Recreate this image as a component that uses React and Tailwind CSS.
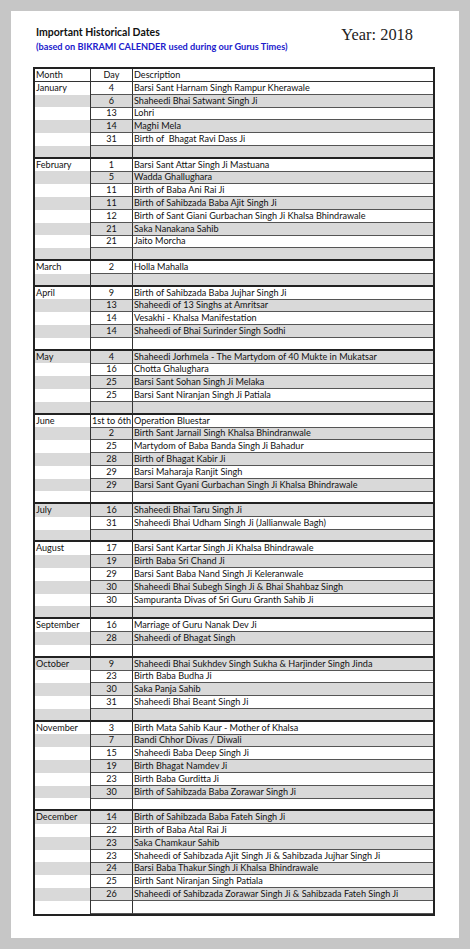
import React from "react";

const months = [
  ["January", [
    ["4", "Barsi Sant Harnam Singh Rampur Kherawale"],
    ["6", "Shaheedi Bhai Satwant Singh Ji"],
    ["13", "Lohri"],
    ["14", "Maghi Mela"],
    ["31", "Birth of  Bhagat Ravi Dass Ji"],
  ]],
  ["February", [
    ["1", "Barsi Sant Attar Singh Ji Mastuana"],
    ["5", "Wadda Ghallughara"],
    ["11", "Birth of Baba Ani Rai Ji"],
    ["11", "Birth of Sahibzada Baba Ajit Singh Ji"],
    ["12", "Birth of Sant Giani Gurbachan Singh Ji Khalsa Bhindrawale"],
    ["21", "Saka Nanakana Sahib"],
    ["21", "Jaito Morcha"],
  ]],
  ["March", [["2", "Holla Mahalla"]]],
  ["April", [
    ["9", "Birth of Sahibzada Baba Jujhar Singh Ji"],
    ["13", "Shaheedi of 13 Singhs at Amritsar"],
    ["14", "Vesakhi - Khalsa Manifestation"],
    ["14", "Shaheedi of Bhai Surinder Singh Sodhi"],
  ]],
  ["May", [
    ["4", "Shaheedi Jorhmela - The Martydom of 40 Mukte in Mukatsar"],
    ["16", "Chotta Ghalughara"],
    ["25", "Barsi Sant Sohan Singh Ji Melaka"],
    ["25", "Barsi Sant Niranjan Singh Ji Patiala"],
  ]],
  ["June", [
    ["1st to 6th", "Operation Bluestar"],
    ["2", "Birth Sant Jarnail Singh Khalsa Bhindranwale"],
    ["25", "Martydom of Baba Banda Singh Ji Bahadur"],
    ["28", "Birth of Bhagat Kabir Ji"],
    ["29", "Barsi Maharaja Ranjit Singh"],
    ["29", "Barsi Sant Gyani Gurbachan Singh Ji Khalsa Bhindrawale"],
  ]],
  ["July", [
    ["16", "Shaheedi Bhai Taru Singh Ji"],
    ["31", "Shaheedi Bhai Udham Singh Ji (Jallianwale Bagh)"],
  ]],
  ["August", [
    ["17", "Barsi Sant Kartar Singh Ji Khalsa Bhindrawale"],
    ["19", "Birth Baba Sri Chand Ji"],
    ["29", "Barsi Sant Baba Nand Singh Ji Keleranwale"],
    ["30", "Shaheedi Bhai Subegh Singh Ji & Bhai Shahbaz Singh"],
    ["30", "Sampuranta Divas of Sri Guru Granth Sahib Ji"],
  ]],
  ["September", [
    ["16", "Marriage of Guru Nanak Dev Ji"],
    ["28", "Shaheedi of Bhagat Singh"],
  ]],
  ["October", [
    ["9", "Shaheedi Bhai Sukhdev Singh Sukha & Harjinder Singh Jinda"],
    ["23", "Birth Baba Budha Ji"],
    ["30", "Saka Panja Sahib"],
    ["31", "Shaheedi Bhai Beant Singh Ji"],
  ]],
  ["November", [
    ["3", "Birth Mata Sahib Kaur - Mother of Khalsa"],
    ["7", "Bandi Chhor Divas / Diwali"],
    ["15", "Shaheedi Baba Deep Singh Ji"],
    ["19", "Birth Bhagat Namdev Ji"],
    ["23", "Birth Baba Gurditta Ji"],
    ["30", "Birth of Sahibzada Baba Zorawar Singh Ji"],
  ]],
  ["December", [
    ["14", "Birth of Sahibzada Baba Fateh Singh Ji"],
    ["22", "Birth of Baba Atal Rai Ji"],
    ["23", "Saka Chamkaur Sahib"],
    ["23", "Shaheedi of Sahibzada Ajit Singh Ji & Sahibzada Jujhar Singh Ji"],
    ["24", "Barsi Baba Thakur Singh Ji Khalsa Bhindrawale"],
    ["25", "Birth Sant Niranjan Singh Patiala"],
    ["26", "Shaheedi of Sahibzada Zorawar Singh Ji & Sahibzada Fateh Singh Ji"],
  ]],
];

// flatten into rows, each month ends with an empty row
const rows = [];
months.forEach(([month, items], mi) => {
  items.forEach(([day, desc], i) => {
    rows.push({ month: i === 0 ? month : "", day, desc, end: false });
  });
  rows.push({ month: "", day: "", desc: "", end: mi < months.length - 1 });
});

const Row = ({ month, day, desc, shaded, end, header }) => {
  const bg = shaded ? "bg-[#d9d9d9]" : "bg-white";
  const line = end
    ? "border-b-2 border-b-[#222]"
    : header
    ? "border-b border-b-[#333]"
    : "border-b border-b-[#555]";
  return (
    <div className={`grid grid-cols-[56px_42px_1fr] h-[12.8px] ${bg}`}>
      <div className={`pl-[1px] border-r border-r-[#333] leading-[12px] ${end || header ? line : ""}`}>
        {month}
      </div>
      <div className={`text-center border-r border-r-[#333] leading-[12px] ${line}`}>{day}</div>
      <div className={`pl-[1px] whitespace-pre leading-[12px] ${line}`}>{desc}</div>
    </div>
  );
};

export default function App() {
  return (
    <div className="min-h-[949px] bg-[#c6c6c6] pt-[11px] pl-[11px]">
      <div className="w-[448px] h-[927px] bg-white">
        <div className="flex justify-between h-[56px] pl-[25px] pr-[46px] pt-[15px]">
          <div style={{ fontFamily: "Lato, 'Liberation Sans', sans-serif" }}>
            <div className="text-[10.5px] font-bold leading-[13px] text-[#111]">Important Historical Dates</div>
            <div className="text-[9.2px] font-bold leading-[13px] mt-[1px] text-[#2020cc]">
              (based on BIKRAMI CALENDER used during our Gurus Times)
            </div>
          </div>
          <div
            className="text-[16.4px] leading-[18px] text-[#222]"
            style={{ fontFamily: "'Liberation Serif', 'Times New Roman', serif" }}
          >
            Year: 2018
          </div>
        </div>
        <div
          className="ml-[22px] w-[402px] border-2 border-[#222] text-[9.1px] text-[#111]"
          style={{ fontFamily: "Lato, 'Liberation Sans', sans-serif" }}
        >
          <Row header month="Month" day="Day" desc="Description" shaded={false} />
          {rows.map((r, i) => (
            <Row key={i} {...r} shaded={(i + 1) % 2 === 0} />
          ))}
        </div>
      </div>
    </div>
  );
}
